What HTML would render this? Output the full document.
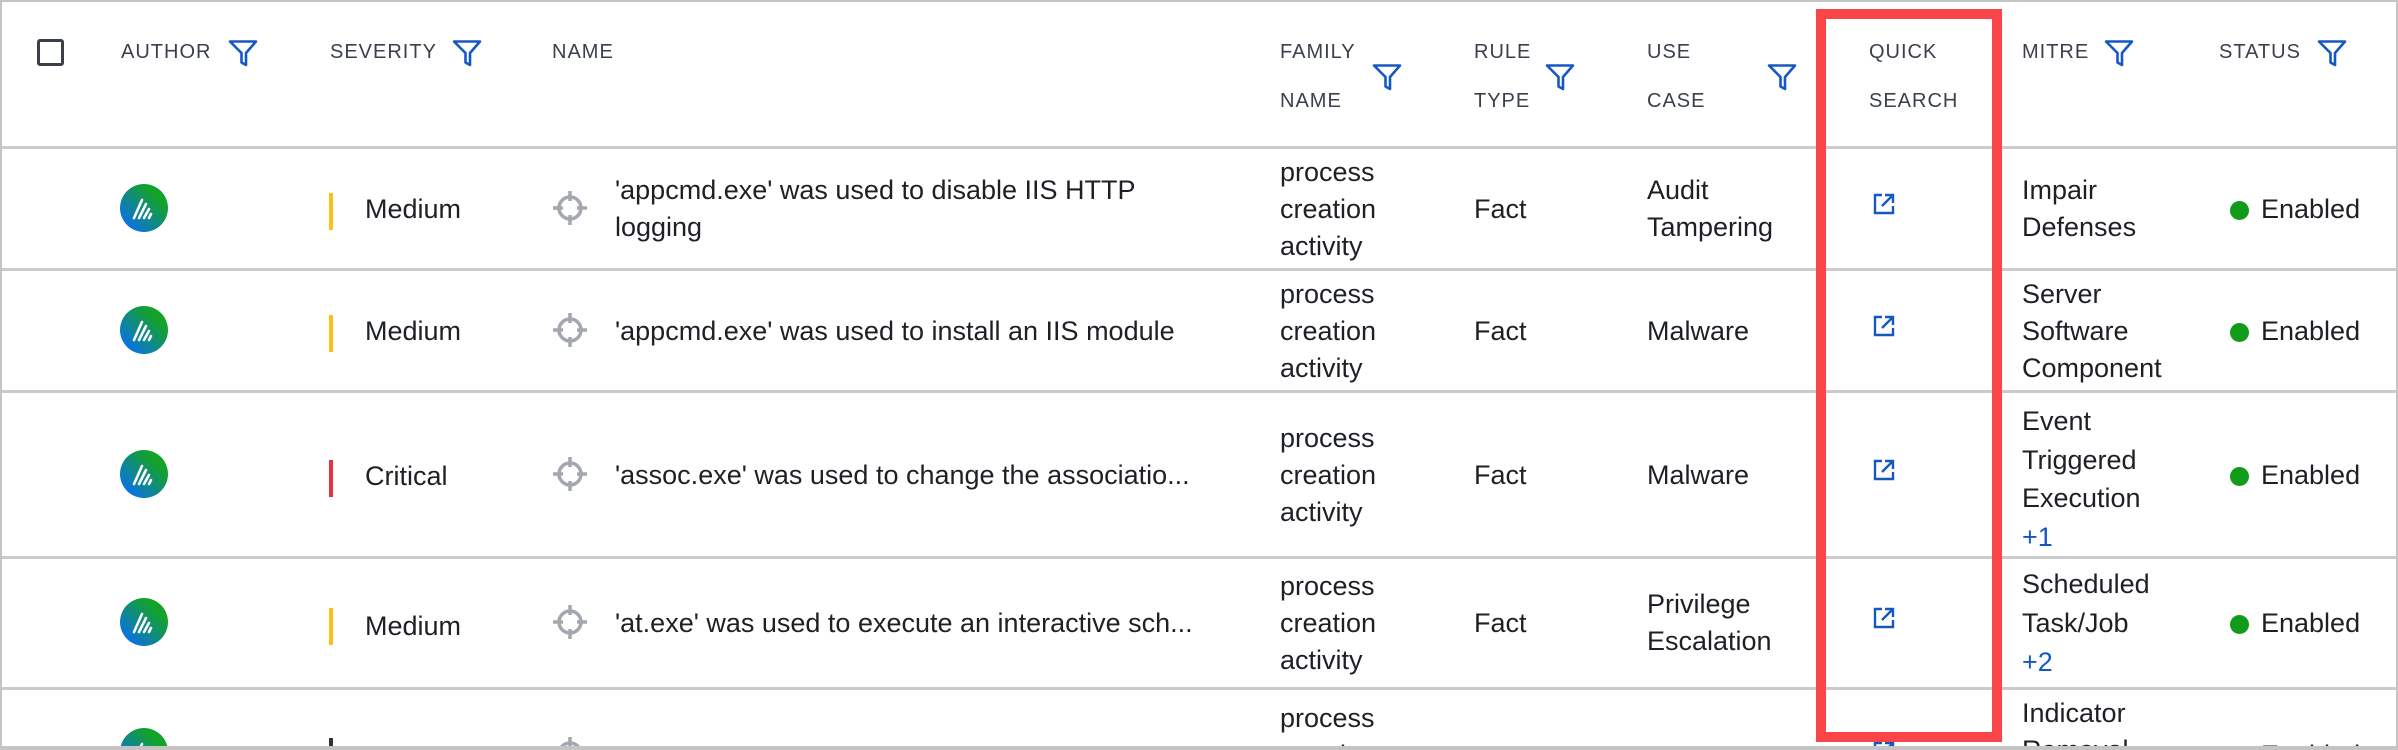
<!DOCTYPE html>
<html><head><meta charset="utf-8"><style>
*{margin:0;padding:0;box-sizing:border-box}
html{width:2398px;height:750px;overflow:hidden}
body{width:2398px;height:750px;overflow:hidden;background:#fff;font-family:"Liberation Sans",sans-serif;color:#1d2025;position:relative}
.frame{position:absolute;left:0;top:0;width:2398px;height:750px;border:2px solid #c4c4c4;border-bottom:3px solid #c4c4c4}
.hl{position:absolute;left:2px;right:2px;height:3px;background:#cbcbcb}
.h{position:absolute;font-size:20px;color:#3a404c;letter-spacing:1px;line-height:49px}
.f{position:absolute;width:30px;height:30px}
.c{position:absolute;display:flex;flex-direction:column;justify-content:center;font-size:27px;line-height:37px;white-space:nowrap}
.blue{color:#1558c4}
.bar{position:absolute;width:4px;height:37px}
.dot{display:inline-block;width:19px;height:19px;border-radius:50%;background:#129b1a;margin-right:12px;vertical-align:-2px}
.red{position:absolute;left:1816px;top:9px;width:186px;height:733px;border:10px solid #fa4548}
</style></head><body>
<div class="frame"></div>
<svg width="0" height="0" style="position:absolute"><defs>
<symbol id="fil" viewBox="0 0 30 30"><path d="M2 3.5H28L18 15V27L13.5 24.5V15Z" fill="none" stroke="#1558c4" stroke-width="2.6" stroke-linejoin="round"/></symbol>
<symbol id="ext" viewBox="0 0 24 24"><path d="M10 3H3V21H21V14" fill="none" stroke="#1558c4" stroke-width="2.4"/><path d="M10 14L21 3M13 3H21V11" fill="none" stroke="#1558c4" stroke-width="2.4"/></symbol>
<symbol id="tg" viewBox="0 0 36 36"><circle cx="18" cy="18" r="11" fill="none" stroke="#a3a7b0" stroke-width="3.5"/><path d="M18 1V11M18 25V35M1 18H11M25 18H35" stroke="#a3a7b0" stroke-width="3.5"/></symbol>
<symbol id="lg" viewBox="0 0 48 48"><defs><linearGradient id="gg" x1="0" y1="1" x2="1" y2="0"><stop offset="0.1" stop-color="#0a6ef0"/><stop offset="0.75" stop-color="#13a22a"/></linearGradient></defs><circle cx="24" cy="24" r="24" fill="url(#gg)"/><path d="M14 34L22 16M19 34L26 20M24 34L29 25M29 34L31 30" stroke="#fff" stroke-width="2.6" stroke-linecap="round"/></symbol>
</defs></svg>

<div style="position:absolute;left:37px;top:39px;width:27px;height:27px;border:3px solid #3a3f4a;border-radius:3px"></div>
<div class="h" style="left:121px;top:28px">AUTHOR</div><svg class="f" style="left:228px;top:38px"><use href="#fil"/></svg>
<div class="h" style="left:330px;top:28px">SEVERITY</div><svg class="f" style="left:452px;top:38px"><use href="#fil"/></svg>
<div class="h" style="left:552px;top:28px">NAME</div>
<div class="h" style="left:1280px;top:28px">FAMILY<br>NAME</div><svg class="f" style="left:1372px;top:62px"><use href="#fil"/></svg>
<div class="h" style="left:1474px;top:28px">RULE<br>TYPE</div><svg class="f" style="left:1545px;top:62px"><use href="#fil"/></svg>
<div class="h" style="left:1647px;top:28px">USE<br>CASE</div><svg class="f" style="left:1767px;top:62px"><use href="#fil"/></svg>
<div class="h" style="left:1869px;top:28px">QUICK<br>SEARCH</div>
<div class="h" style="left:2022px;top:28px">MITRE</div><svg class="f" style="left:2104px;top:38px"><use href="#fil"/></svg>
<div class="h" style="left:2219px;top:28px">STATUS</div><svg class="f" style="left:2317px;top:38px"><use href="#fil"/></svg>

<div class="hl" style="top:146px"></div>
<div class="hl" style="top:268px"></div>
<div class="hl" style="top:390px"></div>
<div class="hl" style="top:556px"></div>
<div class="hl" style="top:687px"></div>

<svg style="position:absolute;left:120px;top:184px;width:48px;height:48px"><use href="#lg"/></svg>
<div class="bar" style="left:329px;top:193px;background:#f8c21a"></div>
<div class="c" style="left:365px;top:149px;height:120px">Medium</div>
<svg style="position:absolute;left:552px;top:190px;width:36px;height:36px"><use href="#tg"/></svg>
<div class="c" style="left:615px;top:149px;height:120px">'appcmd.exe' was used to disable IIS HTTP<br>logging</div>
<div class="c" style="left:1280px;top:149px;height:120px">process<br>creation<br>activity</div>
<div class="c" style="left:1474px;top:149px;height:120px">Fact</div>
<div class="c" style="left:1647px;top:149px;height:120px">Audit<br>Tampering</div>
<svg style="position:absolute;left:1872px;top:192px;width:24px;height:24px"><use href="#ext"/></svg>
<div class="c" style="left:2022px;top:149px;height:120px">Impair<br>Defenses</div>
<div class="c" style="left:2230px;top:149px;height:120px;display:block;padding-top:42px"><span class="dot"></span>Enabled</div>

<svg style="position:absolute;left:120px;top:306px;width:48px;height:48px"><use href="#lg"/></svg>
<div class="bar" style="left:329px;top:315px;background:#f8c21a"></div>
<div class="c" style="left:365px;top:271px;height:120px">Medium</div>
<svg style="position:absolute;left:552px;top:312px;width:36px;height:36px"><use href="#tg"/></svg>
<div class="c" style="left:615px;top:271px;height:120px">'appcmd.exe' was used to install an IIS module</div>
<div class="c" style="left:1280px;top:271px;height:120px">process<br>creation<br>activity</div>
<div class="c" style="left:1474px;top:271px;height:120px">Fact</div>
<div class="c" style="left:1647px;top:271px;height:120px">Malware</div>
<svg style="position:absolute;left:1872px;top:314px;width:24px;height:24px"><use href="#ext"/></svg>
<div class="c" style="left:2022px;top:271px;height:120px">Server<br>Software<br>Component</div>
<div class="c" style="left:2230px;top:271px;height:120px;display:block;padding-top:42px"><span class="dot"></span>Enabled</div>

<svg style="position:absolute;left:120px;top:450px;width:48px;height:48px"><use href="#lg"/></svg>
<div class="bar" style="left:329px;top:460px;background:#e5323b"></div>
<div class="c" style="left:365px;top:393px;height:166px">Critical</div>
<svg style="position:absolute;left:552px;top:456px;width:36px;height:36px"><use href="#tg"/></svg>
<div class="c" style="left:615px;top:393px;height:164px">'assoc.exe' was used to change the associatio...</div>
<div class="c" style="left:1280px;top:393px;height:164px">process<br>creation<br>activity</div>
<div class="c" style="left:1474px;top:393px;height:164px">Fact</div>
<div class="c" style="left:1647px;top:393px;height:164px">Malware</div>
<svg style="position:absolute;left:1872px;top:458px;width:24px;height:24px"><use href="#ext"/></svg>
<div class="c" style="left:2022px;top:397px;height:164px;line-height:38.5px">Event<br>Triggered<br>Execution<br><span class="blue">+1</span></div>
<div class="c" style="left:2230px;top:393px;height:164px;display:block;padding-top:64px"><span class="dot"></span>Enabled</div>

<svg style="position:absolute;left:120px;top:598px;width:48px;height:48px"><use href="#lg"/></svg>
<div class="bar" style="left:329px;top:608px;background:#f8c21a"></div>
<div class="c" style="left:365px;top:559px;height:134px">Medium</div>
<svg style="position:absolute;left:552px;top:604px;width:36px;height:36px"><use href="#tg"/></svg>
<div class="c" style="left:615px;top:559px;height:128px">'at.exe' was used to execute an interactive sch...</div>
<div class="c" style="left:1280px;top:559px;height:128px">process<br>creation<br>activity</div>
<div class="c" style="left:1474px;top:559px;height:128px">Fact</div>
<div class="c" style="left:1647px;top:559px;height:128px">Privilege<br>Escalation</div>
<svg style="position:absolute;left:1872px;top:606px;width:24px;height:24px"><use href="#ext"/></svg>
<div class="c" style="left:2022px;top:559px;height:128px;line-height:39px">Scheduled<br>Task/Job<br><span class="blue">+2</span></div>
<div class="c" style="left:2230px;top:559px;height:128px;display:block;padding-top:46px"><span class="dot"></span>Enabled</div>

<svg style="position:absolute;left:120px;top:728px;width:48px;height:48px"><use href="#lg"/></svg>
<div class="bar" style="left:329px;top:738px;background:#333"></div>
<svg style="position:absolute;left:552px;top:736px;width:36px;height:36px"><use href="#tg"/></svg>
<div class="c" style="left:615px;top:740px;height:37px">'bcdedit.exe' was used to delete the recovery...</div>
<div class="c" style="left:1280px;top:700px;height:37px">process</div>
<div class="c" style="left:1280px;top:737px;height:37px">creation</div>
<div class="c" style="left:1474px;top:740px;height:37px">Fact</div>
<div class="c" style="left:1647px;top:740px;height:37px">Defense</div>
<svg style="position:absolute;left:1872px;top:740px;width:24px;height:24px"><use href="#ext"/></svg>
<div class="c" style="left:2022px;top:695px;height:37px">Indicator</div>
<div class="c" style="left:2022px;top:732px;height:37px">Removal</div>
<div class="c" style="left:2230px;top:737px;height:37px;display:block"><span class="dot"></span>Enabled</div>

<div style="position:absolute;left:0;top:746px;width:2398px;height:4px;background:#c4c4c4"></div>
<div class="red"></div>
</body></html>
